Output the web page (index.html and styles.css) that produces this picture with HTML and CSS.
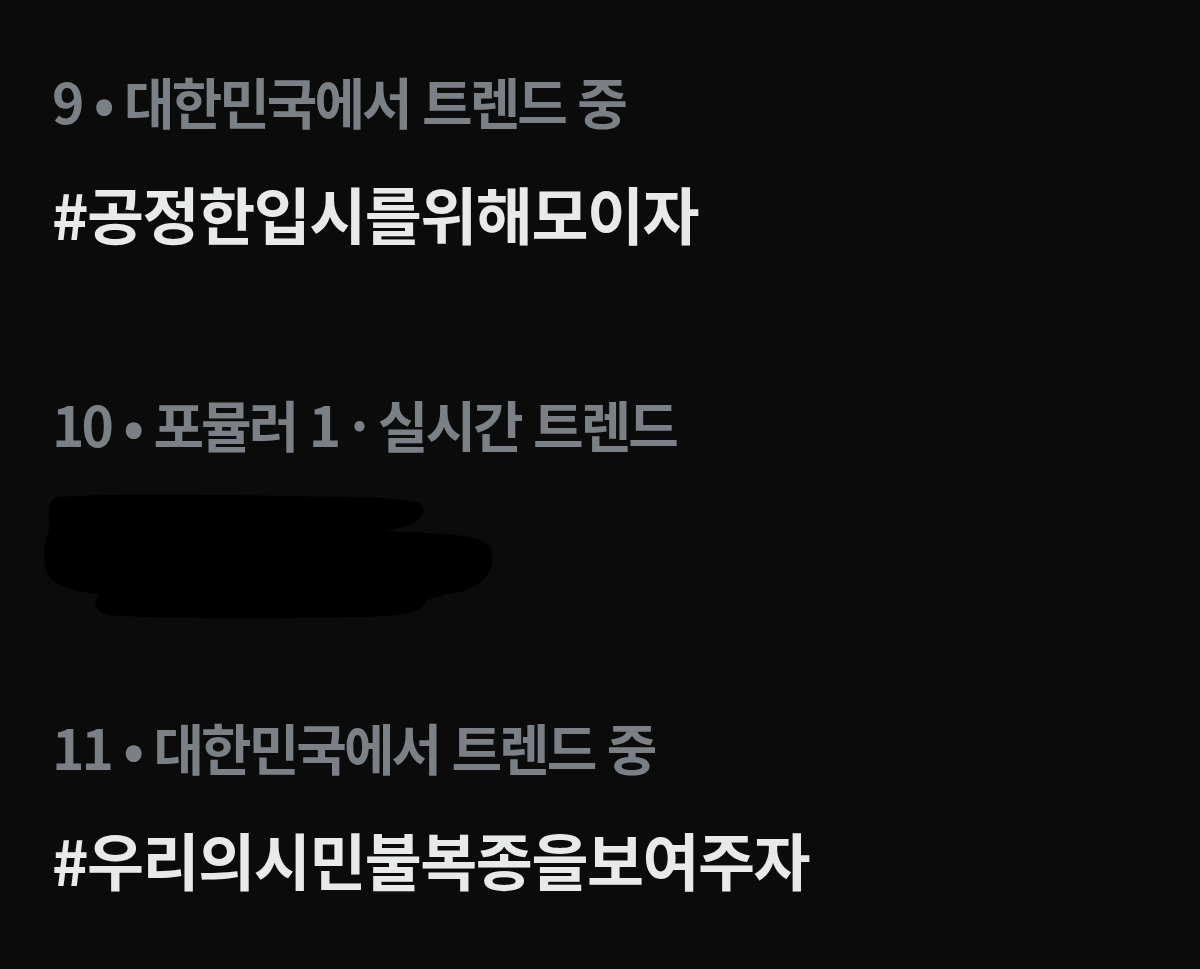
FILE: index.html
```html
<!DOCTYPE html>
<html lang="ko">
<head>
  <meta charset="UTF-8" />
  <meta name="viewport" content="width=device-width, initial-scale=1.0"/>
  <title>트렌드</title>
  <link rel="stylesheet" href="styles.css">
</head>
<body>

  <div class="trends">
    <div class="trend">
      <div class="trend-meta">9 • 대한민국에서 트렌드 중</div>
      <div class="trend-name">#공정한입시를위해모이자</div>
    </div>

    <div class="trend">
      <div class="trend-meta">10 • 포뮬러 1 · 실시간 트렌드</div>
      <div class="trend-name trend-hidden">
        <!-- 가려진 트렌드 -->
        <svg class="scribble" width="460" height="130" viewBox="0 0 460 130">
          <path d="M12 6 C80 2 200 4 300 6 C340 7 372 8 378 14 C384 24 372 36 340 40 C400 42 440 44 446 56 C452 70 448 90 420 100 C400 104 390 106 382 110 C378 122 360 126 300 126 C220 128 120 128 64 124 C50 120 48 112 56 104 C30 100 10 94 4 84 C-2 70 0 50 6 36 C4 24 4 10 12 6 Z" />
        </svg>
      </div>
    </div>

    <div class="trend">
      <div class="trend-meta">11 • 대한민국에서 트렌드 중</div>
      <div class="trend-name">#우리의시민불복종을보여주자</div>
    </div>
  </div>

</body>
</html>
```

FILE: styles.css
```css
body {
  margin: 0;
  background-color: #0b0b0b;
  font-family: "Noto Sans CJK KR", "Noto Sans", sans-serif;
}

.trends {
  padding: 70px 0 0 52px;
}

.trend {
  padding-bottom: 145px;
}

.trend:last-child {
  padding-bottom: 40px;
}

.trend-meta {
  height: 60px;
  line-height: 60px;
  font-size: 55px;
  font-weight: 700;
  letter-spacing: -3px;
  color: #7b8087;
  white-space: nowrap;
}

.trend-name {
  margin-top: 48px;
  height: 70px;
  line-height: 70px;
  font-size: 62px;
  font-weight: 700;
  letter-spacing: -1.5px;
  color: #e7e9ea;
  white-space: nowrap;
}

.trend-hidden {
  position: relative;
}

.scribble {
  position: absolute;
  left: -8px;
  top: -10px;
  fill: #000;
}
```
